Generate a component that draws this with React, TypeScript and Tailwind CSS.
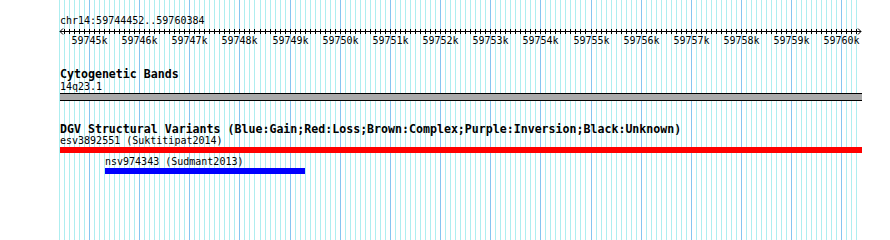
const BP_PER_PX = 19.94;
const xOf = (bp: number) => 89 + (bp - 59745000) / BP_PER_PX;

function GridLines() {
  const lines = [];
  for (let bp = 59744400; bp <= 59760300; bp += 100) {
    const major = bp % 1000 === 0;
    const x = Math.round(xOf(bp)) + 0.5;
    lines.push(
      <line
        key={bp}
        x1={x}
        x2={x}
        y1={0}
        y2={240}
        stroke={major ? "#86c6f0" : "#aeeef0"}
        strokeWidth={1}
      />
    );
  }
  return (
    <svg
      className="absolute inset-0"
      width={890}
      height={240}
      shapeRendering="crispEdges"
    >
      {lines}
    </svg>
  );
}

function Ruler() {
  const ticks = [];
  for (let bp = 59744500; bp <= 59760300; bp += 100) {
    const x = Math.round(xOf(bp)) + 0.5;
    ticks.push(
      <line key={bp} x1={x} x2={x} y1={3} y2={8} stroke="#000" />
    );
  }
  const labels = [];
  for (let k = 59745; k <= 59760; k++) {
    labels.push(
      <text
        key={k}
        x={Math.round(xOf(k * 1000)) + 0.5}
        y={18}
        textAnchor="middle"
        fontSize={10}
        fontFamily="'DejaVu Sans Mono', monospace"
        fill="#000"
      >
        {k}k
      </text>
    );
  }
  return (
    <svg className="block" width={890} height={20}>
      <g shapeRendering="crispEdges">
        <line x1={60} x2={861} y1={5.5} y2={5.5} stroke="#000" />
        {ticks}
      </g>
      {/* arrow heads */}
      <polyline points="63,2.5 60,5.5 63,8.5" fill="none" stroke="#000" />
      <polyline points="858,2.5 861,5.5 858,8.5" fill="none" stroke="#000" />
      {labels}
    </svg>
  );
}

export default function App() {
  return (
    <div className="relative w-[890px] h-[240px] bg-white overflow-hidden text-black font-['DejaVu_Sans_Mono',monospace]">
      <GridLines />
      <div className="relative pt-[16px]">
        <div className="pl-[60px] text-[10px] leading-[10px]">
          chr14:59744452..59760384
        </div>
        <Ruler />

        <div className="mt-[23px] pl-[60px] text-[11.6px] leading-[11px] font-bold">
          Cytogenetic Bands
        </div>
        <div className="mt-[2px] pl-[60px] text-[10px] leading-[10px]">
          14q23.1
        </div>
        <div className="mt-[1px] ml-[60px] w-[802px] h-[8px] border-y border-black bg-[#aaaaaa]" />

        <div className="mt-[23px] pl-[60px] text-[11.6px] leading-[11px] font-bold whitespace-nowrap">
          DGV Structural Variants (Blue:Gain;Red:Loss;Brown:Complex;Purple:Inversion;Black:Unknown)
        </div>
        <div className="mt-[1px] pl-[60px] text-[10px] leading-[10px]">
          esv3892551 (Suktitipat2014)
        </div>
        <div className="mt-[1px] ml-[60px] w-[802px] h-[6px] bg-[#ff0000]" />

        <div className="mt-[4px] pl-[105px] text-[10px] leading-[10px]">
          nsv974343 (Sudmant2013)
        </div>
        <div className="mt-[1px] ml-[105px] w-[200px] h-[6px] bg-[#0000ff]" />
      </div>
    </div>
  );
}
